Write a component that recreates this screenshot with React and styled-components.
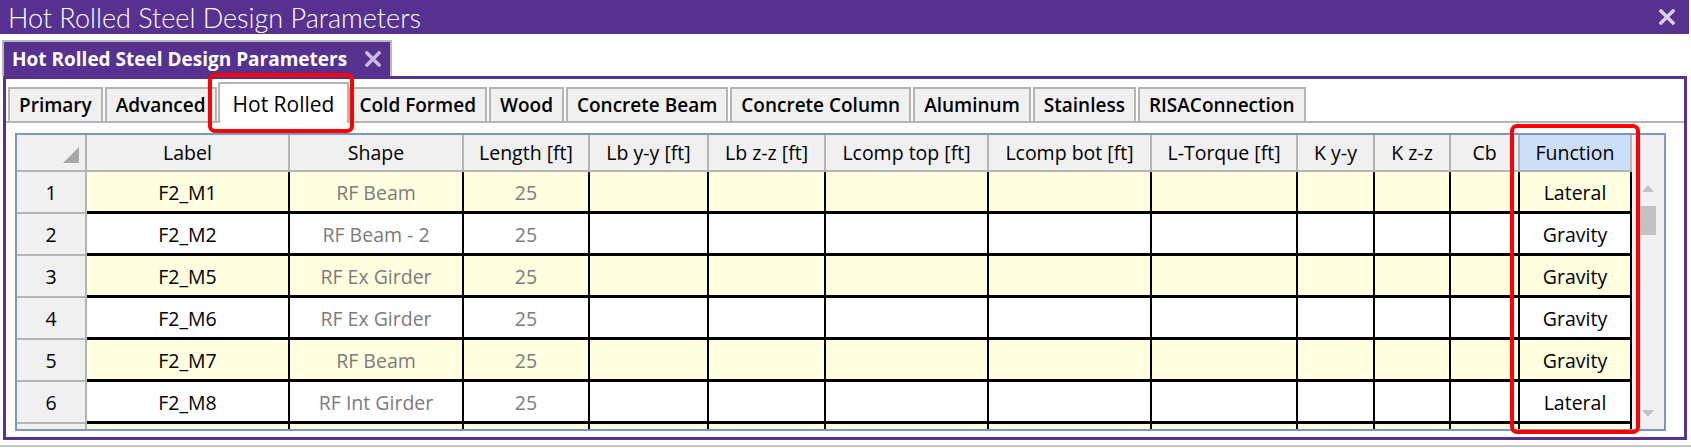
import styled, { createGlobalStyle } from "styled-components";

const PURPLE = "#56318f";
const TAB_BORDER = "#b4b4b4";
const YELLOW = "#ffffe0";

const GlobalStyle = createGlobalStyle`
  html, body {
    margin: 0;
    padding: 0;
    background: #ffffff;
  }
  body {
    font-family: "Open Sans", Lato, sans-serif;
    color: #000;
  }
  * {
    box-sizing: border-box;
  }
`;

const Window = styled.div`
  position: relative;
  width: 1691px;
  height: 448px;
  overflow: hidden;
  background: #ffffff;
`;

const TitleBar = styled.div`
  height: 34px;
  margin-right: 2px;
  background: ${PURPLE};
  display: flex;
  align-items: center;
  justify-content: space-between;
  padding: 0 14px 0 8px;
`;

const TitleText = styled.div`
  color: #ffffff;
  font-family: Lato, "Open Sans", sans-serif;
  font-size: 27px;
  font-weight: 300;
  line-height: 1;
`;

const DocTabRow = styled.div`
  height: 42px;
  display: flex;
  align-items: flex-end;
  padding-left: 2px;
`;

const DocTab = styled.div`
  height: 36px;
  background: ${PURPLE};
  border: 2px solid #b9b9b9;
  border-bottom: 0;
  display: flex;
  align-items: center;
  gap: 18px;
  padding: 0 9px 0 8px;
  color: #ffffff;
  font-size: 19px;
  font-weight: 700;
`;

const Panel = styled.div`
  height: 364px;
  margin: 0 4px 0 3px;
  border: 3px solid ${PURPLE};
  background: #ffffff;
  display: flex;
  flex-direction: column;
`;

const TabStrip = styled.div`
  height: 44px;
  flex-shrink: 0;
  display: flex;
  align-items: flex-end;
  padding: 3px 0 0 2px;
  border-bottom: 2px solid ${TAB_BORDER};
`;

const Tab = styled.div`
  position: relative;
  height: ${(p) => (p.$active ? "41px" : "34px")};
  margin: ${(p) => (p.$active ? "0 -1px -2px -1px" : "0 2px 0 0")};
  padding: 0 ${(p) => (p.$active ? "13px" : "9px")};
  display: flex;
  align-items: center;
  background: ${(p) => (p.$active ? "#ffffff" : "#f0f0f0")};
  border: 2px solid ${TAB_BORDER};
  border-bottom: 0;
  font-size: ${(p) => (p.$active ? "21px" : "19px")};
  font-weight: ${(p) => (p.$active ? 500 : 600)};
  z-index: ${(p) => (p.$active ? 1 : 0)};
  white-space: nowrap;
`;

const Pane = styled.div`
  flex: 1;
  min-height: 0;
  padding: 10px 18px 6px 9px;
  display: flex;
`;

const GridFrame = styled.div`
  flex: 1;
  min-height: 0;
  display: flex;
  border: 2px solid #7b98bd;
  overflow: hidden;
`;

const COLS = [70, 203, 174, 126, 119, 117, 163, 163, 146, 77, 76, 69, 112];

const Table = styled.div`
  display: grid;
  grid-template-columns: ${COLS.map((c) => c + "px").join(" ")};
  grid-template-rows: 37px;
  grid-auto-rows: 42px;
  align-content: start;
  font-size: 19.5px;
`;

const Cell = styled.div`
  display: flex;
  align-items: center;
  justify-content: center;
  white-space: nowrap;
  overflow: hidden;
`;

const HeaderCell = styled(Cell)`
  position: relative;
  background: ${(p) => (p.$selected ? "#cddff8" : "#f0f0f0")};
  border-right: 2px solid ${TAB_BORDER};
  border-bottom: 2px solid ${TAB_BORDER};
`;

const Corner = styled.div`
  position: absolute;
  right: 6px;
  bottom: 7px;
  width: 0;
  height: 0;
  border-left: 16px solid transparent;
  border-bottom: 16px solid #a8a8a8;
`;

const RowHeader = styled(Cell)`
  background: #f0f0f0;
  border-right: 2px solid ${TAB_BORDER};
  border-bottom: 2px solid ${TAB_BORDER};
`;

const DataCell = styled(Cell)`
  background: ${(p) => (p.$yellow ? YELLOW : "#ffffff")};
  color: ${(p) => (p.$muted ? "#7c7c7c" : "#000")};
  border-right: 2px solid #000;
  border-bottom: 3px solid #000;
  padding-top: 2px;
`;

const ScrollBar = styled.div`
  width: 33px;
  background: #f0f0f0;
  display: flex;
  flex-direction: column;
  align-items: center;
`;

const ScrollHeadSpace = styled.div`
  height: 37px;
`;

const ScrollArrow = styled.div`
  height: 32px;
  display: flex;
  align-items: center;
  justify-content: center;
`;

const ArrowShape = styled.div`
  width: 0;
  height: 0;
  border-left: 6px solid transparent;
  border-right: 6px solid transparent;
  ${(p) =>
    p.$down
      ? "border-top: 7px solid #c2c2c2;"
      : "border-bottom: 7px solid #c2c2c2;"}
`;

const Thumb = styled.div`
  width: 16px;
  height: 29px;
  margin-top: 2px;
  background: #c2c2c3;
`;

const ScrollFill = styled.div`
  flex: 1;
`;

const Highlight = styled.div`
  position: absolute;
  left: ${(p) => p.$x}px;
  top: ${(p) => p.$y}px;
  width: ${(p) => p.$w}px;
  height: ${(p) => p.$h}px;
  border: 4px solid #ff0000;
  border-radius: 7px;
  pointer-events: none;
  z-index: 5;
`;

const BottomEdge = styled.div`
  height: 2px;
  margin-top: 5px;
  background: #c6c6c6;
`;

function CloseIcon({ size, color, stroke }) {
  return (
    <svg width={size} height={size} viewBox="0 0 16 16">
      <path
        d="M2 2 L14 14 M14 2 L2 14"
        stroke={color}
        strokeWidth={stroke}
        strokeLinecap="square"
      />
    </svg>
  );
}

const TABS = [
  "Primary",
  "Advanced",
  "Hot Rolled",
  "Cold Formed",
  "Wood",
  "Concrete Beam",
  "Concrete Column",
  "Aluminum",
  "Stainless",
  "RISAConnection",
];

const HEADERS = [
  "Label",
  "Shape",
  "Length [ft]",
  "Lb y-y [ft]",
  "Lb z-z [ft]",
  "Lcomp top [ft]",
  "Lcomp bot [ft]",
  "L-Torque [ft]",
  "K y-y",
  "K z-z",
  "Cb",
  "Function",
];

const ROWS = [
  ["1", "F2_M1", "RF Beam", "25", "Lateral"],
  ["2", "F2_M2", "RF Beam - 2", "25", "Gravity"],
  ["3", "F2_M5", "RF Ex Girder", "25", "Gravity"],
  ["4", "F2_M6", "RF Ex Girder", "25", "Gravity"],
  ["5", "F2_M7", "RF Beam", "25", "Gravity"],
  ["6", "F2_M8", "RF Int Girder", "25", "Lateral"],
  ["", "", "", "", ""],
];

export default function App() {
  return (
    <Window>
      <GlobalStyle />
      <TitleBar>
        <TitleText>Hot Rolled Steel Design Parameters</TitleText>
        <CloseIcon size={16} color="#d9d1e8" stroke={3.4} />
      </TitleBar>

      <DocTabRow>
        <DocTab>
          Hot Rolled Steel Design Parameters
          <CloseIcon size={16} color="#c9bddf" stroke={3.4} />
        </DocTab>
      </DocTabRow>

      <Panel>
        <TabStrip>
          {TABS.map((t) => (
            <Tab key={t} $active={t === "Hot Rolled"}>
              {t}
            </Tab>
          ))}
        </TabStrip>

        <Pane>
          <GridFrame>
            <Table>
              <HeaderCell>
                <Corner />
              </HeaderCell>
              {HEADERS.map((h) => (
                <HeaderCell key={h} $selected={h === "Function"}>
                  {h}
                </HeaderCell>
              ))}

              {ROWS.map(([num, label, shape, length, fn], i) => {
                const yellow = i % 2 === 0;
                return [
                  <RowHeader key={`n${i}`}>{num}</RowHeader>,
                  <DataCell key={`l${i}`} $yellow={yellow}>{label}</DataCell>,
                  <DataCell key={`s${i}`} $yellow={yellow} $muted>{shape}</DataCell>,
                  <DataCell key={`g${i}`} $yellow={yellow} $muted>{length}</DataCell>,
                  ...Array.from({ length: 8 }, (_, k) => (
                    <DataCell key={`e${i}-${k}`} $yellow={yellow} />
                  )),
                  <DataCell key={`f${i}`} $yellow={yellow}>{fn}</DataCell>,
                ];
              })}
            </Table>

            <ScrollBar>
              <ScrollHeadSpace />
              <ScrollArrow>
                <ArrowShape />
              </ScrollArrow>
              <Thumb />
              <ScrollFill />
              <ScrollArrow>
                <ArrowShape $down />
              </ScrollArrow>
            </ScrollBar>
          </GridFrame>
        </Pane>
      </Panel>

      <BottomEdge />

      <Highlight $x={208} $y={73} $w={146} $h={60} />
      <Highlight $x={1510} $y={124} $w={130} $h={310} />
    </Window>
  );
}
